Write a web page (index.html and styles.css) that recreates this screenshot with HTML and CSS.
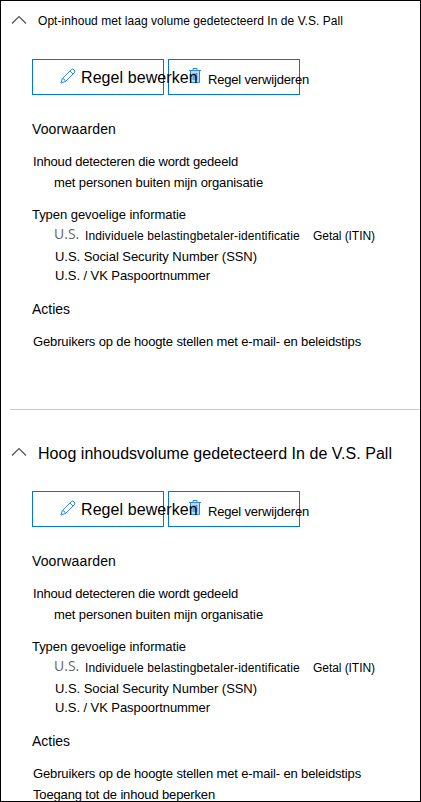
FILE: index.html
```html
<!DOCTYPE html>
<html lang="nl">
<head>
<meta charset="utf-8">
<title>Regels</title>
<link rel="stylesheet" href="styles.css">
</head>
<body>
<svg class="defs" aria-hidden="true">
  <symbol id="chevron" viewBox="0 0 16 10"><path d="M1 8.5 8 1.5 15 8.5" fill="none" stroke="#505050" stroke-width="1.2"/></symbol>
  <symbol id="pencil" viewBox="0 0 16 16"><path d="M1 15 2.4 10.5 11.3 1.6Q12.6.4 14 1.7T14.4 4.6L5.5 13.5ZM2.4 10.5Q5 10.8 5.5 13.5M10 3 13 6" fill="none" stroke="#2b88d8" stroke-width="1"/></symbol>
  <symbol id="trash" viewBox="0 0 12 15"><path d="M2 3H10V14H2Z" fill="#b9dcf6"/><path d="M0 2.5H12M4 2.5V.5H8V2.5M1.5 2.5V14.5H10.5V2.5M4.2 5V12M6 5V12M7.8 5V12" fill="none" stroke="#2b88d8" stroke-width="1"/></symbol>
</svg>
<main class="panel">
  <section class="rule">
    <header class="head"><svg class="chevron"><use href="#chevron"/></svg><h2 class="title small">Opt-inhoud met laag volume gedetecteerd In de V.S. Pall</h2></header>
    <div class="buttons">
      <button class="btn edit"><svg class="pencil"><use href="#pencil"/></svg><span>Regel bewerken</span></button>
      <button class="btn remove"><svg class="trash"><use href="#trash"/></svg><span>Regel verwijderen</span></button>
    </div>
    <h3 class="heading">Voorwaarden</h3>
    <p class="line detect">Inhoud detecteren die wordt gedeeld</p>
    <p class="line sub people">met personen buiten mijn organisatie</p>
    <p class="line types">Typen gevoelige informatie</p>
    <p class="line sub itin"><span class="us">U.S.</span><span class="name">Individuele belastingbetaler-identificatie</span><span class="number">Getal (ITIN)</span></p>
    <p class="line sub ssn">U.S. Social Security Number (SSN)</p>
    <p class="line sub passport">U.S. / VK Paspoortnummer</p>
    <h3 class="heading actions">Acties</h3>
    <p class="line notify">Gebruikers op de hoogte stellen met e-mail- en beleidstips</p>
  </section>
  <section class="rule">
    <header class="head"><svg class="chevron"><use href="#chevron"/></svg><h2 class="title">Hoog inhoudsvolume gedetecteerd In de V.S. Pall</h2></header>
    <div class="buttons">
      <button class="btn edit"><svg class="pencil"><use href="#pencil"/></svg><span>Regel bewerken</span></button>
      <button class="btn remove"><svg class="trash"><use href="#trash"/></svg><span>Regel verwijderen</span></button>
    </div>
    <h3 class="heading">Voorwaarden</h3>
    <p class="line detect">Inhoud detecteren die wordt gedeeld</p>
    <p class="line sub people">met personen buiten mijn organisatie</p>
    <p class="line types">Typen gevoelige informatie</p>
    <p class="line sub itin"><span class="us">U.S.</span><span class="name">Individuele belastingbetaler-identificatie</span><span class="number">Getal (ITIN)</span></p>
    <p class="line sub ssn">U.S. Social Security Number (SSN)</p>
    <p class="line sub passport">U.S. / VK Paspoortnummer</p>
    <h3 class="heading actions">Acties</h3>
    <p class="line notify">Gebruikers op de hoogte stellen met e-mail- en beleidstips</p>
    <p class="line restrict">Toegang tot de inhoud beperken</p>
  </section>
</main>
</body>
</html>
```
FILE: styles.css
```css
* { box-sizing: border-box; }
body { margin: 0; background: #fff; color: #000; font-family: "Liberation Sans", Arial, sans-serif; }
h2, h3, p { margin: 0; font-weight: 400; line-height: 20px; white-space: nowrap; }
.defs { display: none; }
.panel { width: 421px; height: 802px; border: 1px solid #000; overflow: hidden; }

.rule { margin-left: 9px; height: 409px; padding-top: 10px; }
.rule:first-child { border-bottom: 1px solid #c8c8c8; }
.rule + .rule { margin-top: 23px; }

.head { display: flex; height: 20px; padding-left: 1px; }
.chevron { width: 16px; height: 10px; margin: 4px 11px 0 0; flex: none; }
.title { padding-top: 1px; font-size: 16px; letter-spacing: 0.031px; }
.title.small { padding-top: 0; font-size: 12px; letter-spacing: 0.047px; }

.buttons { display: flex; gap: 4px; margin: 28px 0 24px 22px; }
.btn { display: flex; width: 132px; height: 36px; padding: 0; border: 1px solid #0078d4; background: none; color: #000; font: 16px/20px "Liberation Sans", Arial, sans-serif; white-space: nowrap; }
.btn span { flex: none; }
.btn svg { flex: none; }
/* The edit label runs over the neighbouring button's icon. */
.edit { position: relative; z-index: 1; }
.pencil { width: 16px; height: 16px; margin: 8px 5px 0 27px; }
.edit span { margin-top: 8px; letter-spacing: 0.08px; }
.trash { width: 12px; height: 15px; margin: 8px 7px 0 20px; }
.remove { font-size: 13px; letter-spacing: -0.18px; }
.remove span { margin-top: 10px; }

.heading { margin-left: 22px; font-size: 14px; letter-spacing: 0.135px; }
.actions { margin-top: 13px; letter-spacing: -0.02px; }
.line { height: 20px; margin-left: 23px; font-size: 13px; }
.sub { margin-left: 45px; }
.detect { margin-top: 13px; letter-spacing: -0.173px; }
.people { margin-top: 1px; margin-left: 44px; letter-spacing: -0.116px; }
.types { margin-top: 12px; margin-left: 22px; letter-spacing: -0.053px; }
.itin { display: flex; margin-top: 1px; margin-left: 44px; font-size: 12px; }
.us { width: 31px; margin-top: -1px; color: #666; font: 14px/18px "Open Sans", "Noto Sans", sans-serif; }
.name { width: 228px; letter-spacing: 0.13px; }
.number { letter-spacing: -0.06px; }
.ssn { margin-top: 1px; letter-spacing: -0.053px; }
.passport { margin-top: -1px; letter-spacing: -0.074px; }
.notify { margin-top: 13px; letter-spacing: -0.138px; }
.restrict { margin-top: 1px; letter-spacing: -0.15px; }
```
